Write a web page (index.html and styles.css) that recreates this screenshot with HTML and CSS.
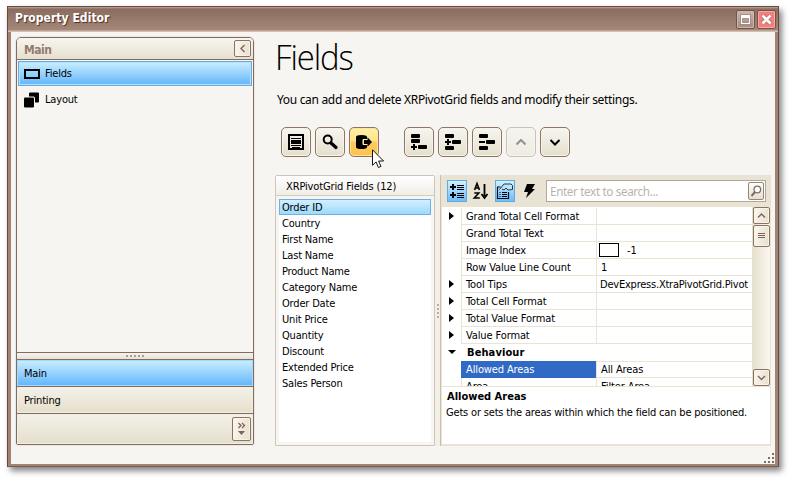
FILE: index.html
```html
<!DOCTYPE html>
<html lang="en">
<head>
<meta charset="utf-8">
<title>Property Editor</title>
<link rel="stylesheet" href="styles.css">
</head>
<body>
<div class="window">
  <header class="titlebar">
    <h1>Property Editor</h1>
    <button class="win-btn" aria-label="Maximize"><svg width="17" height="17"><path fill="#fff" stroke="#806257" stroke-width=".6" fill-rule="evenodd" d="M3.500 3.500h10v10h-10zM5.500 7.500v4h6v-4z"/></svg></button>
    <button class="win-btn close" aria-label="Close"><svg width="17" height="17"><path d="M4.500 4.500l8 8M12.500 4.500l-8 8" stroke="#a8625f" stroke-width="4"/><path d="M4.500 4.500l8 8M12.500 4.500l-8 8" stroke="#fff" stroke-width="2.700"/></svg></button>
  </header>
  <div class="content">
    <nav class="nav">
      <div class="nav-head"><b>Main</b><button class="small-btn" aria-label="Collapse"><svg width="15" height="15"><path d="M9.500 4L6 7.500 9.500 11" fill="none" stroke="#806257" stroke-width="1.4"/></svg></button></div>
      <div class="nav-items">
        <div class="nav-item selected"><svg width="16" height="16"><path d="M1 4h14v8H1z" fill="none" stroke="#000" stroke-width="2"/></svg><span>Fields</span></div>
        <div class="nav-item"><svg width="16" height="16"><path d="M5 1.500a1 1 0 0 1 1-1h8a1 1 0 0 1 1 1v8a1 1 0 0 1-1 1h-3V6a1.500 1.500 0 0 0-1.500-1.500H5z"/><rect y="5.500" width="10" height="10" rx="1"/></svg><span>Layout</span></div>
      </div>
      <div class="nav-split"><i></i><i></i><i></i><i></i><i></i></div>
      <div class="group active">Main</div>
      <div class="group">Printing</div>
      <div class="nav-foot"><button class="small-btn tall" aria-label="Configure"><svg width="17" height="22"><path d="M5.500 5l2.500 2.500L5.500 10M9 5l2.500 2.500L9 10" fill="none" stroke="#806257" stroke-width="1.3"/><path d="M5 13h7l-3.500 4z" fill="#806257"/></svg></button></div>
    </nav>
    <main class="main">
      <h2>Fields</h2>
      <p class="intro">You can add and delete XRPivotGrid fields and modify their settings.</p>
      <div class="actions">
        <button><svg width="28" height="28"><path d="M7 7h14v14H7z" fill="none" stroke="#000" stroke-width="2"/><path d="M9 10.500h10M9 17.500h10M10 19.500h8" stroke="#000"/><path d="M9 12h10v4H9z"/></svg></button>
        <button><svg width="28" height="28"><circle cx="11.700" cy="11.500" r="4" fill="none" stroke="#000" stroke-width="2"/><path d="M15 15l5 4.500" stroke="#000" stroke-width="3.200" stroke-linecap="round"/></svg></button>
        <button class="hot"><svg width="28" height="28"><path d="M6 9q0-2 5.500-2t5.500 2v2h-4v6h4v2q0 2-5.500 2T6 19z"/><path d="M14 12h3.500V9.200L22 14l-4.500 4.800V16H14z"/><path d="M17 11.500h-4v5h4" stroke="#fff0ab" fill="none"/></svg></button>
        <button class="gap"><svg width="28" height="28"><rect x="6" y="6" width="9" height="4" rx="1"/><rect x="6" y="11" width="9" height="4" rx="1"/><rect x="13" y="17" width="9" height="4" rx="1"/><path d="M6 19h6M9 16v6" stroke="#000" stroke-width="2"/></svg></button>
        <button><svg width="28" height="28"><rect x="6" y="6" width="9" height="4" rx="1"/><rect x="13" y="12" width="9" height="4" rx="1"/><rect x="6" y="18" width="9" height="4" rx="1"/><path d="M6 14h6M9 11v6" stroke="#000" stroke-width="2"/></svg></button>
        <button><svg width="28" height="28"><rect x="6" y="6" width="9" height="4" rx="1"/><rect x="13" y="12" width="9" height="4" rx="1"/><rect x="6" y="18" width="9" height="4" rx="1"/><path d="M6 14h6" stroke="#000" stroke-width="2"/></svg></button>
        <button class="disabled"><svg width="28" height="28"><path d="M9.500 16.500L14 12l4.500 4.500" fill="none" stroke="#000" stroke-width="2"/></svg></button>
        <button><svg width="28" height="28"><path d="M9.500 12L14 16.500 18.500 12" fill="none" stroke="#000" stroke-width="2"/></svg></button>
      </div>
      <div class="panes">
        <section class="fields">
          <h3>XRPivotGrid Fields (12)</h3>
          <ul>
            <li class="selected">Order ID</li><li>Country</li><li>First Name</li><li>Last Name</li><li>Product Name</li><li>Category Name</li><li>Order Date</li><li>Unit Price</li><li>Quantity</li><li>Discount</li><li>Extended Price</li><li>Sales Person</li>
          </ul>
        </section>
        <div class="splitter"><i></i><i></i><i></i><i></i></div>
        <section class="props">
          <div class="tools">
            <button class="on" aria-label="Categorized"><svg width="18" height="20"><path d="M2 6h6M5 3v6M2 14h6M5 11v6" stroke="#000" stroke-width="2"/><path d="M9 4.500h7M9 6.500h7M9 8.500h7M9 12.500h7M9 14.500h7M9 16.500h7" stroke="#000"/></svg></button>
            <button aria-label="Sort"><svg width="18" height="20"><path d="M2.500 9L5 2.500 7.500 9M3.500 7h3M2.300 12h4.500l-4.500 5h5.500" fill="none" stroke="#000" stroke-width="1.6"/><path d="M12.500 3v12M9.500 13l3 4 3-4" fill="none" stroke="#000" stroke-width="1.8"/></svg></button>
            <button class="on" aria-label="Properties"><svg width="18" height="20"><path d="M4.500 6h-3v11.500h11V11" fill="none" stroke="#111" stroke-width="1.200"/><path d="M3.500 8.500L8 3h7l1.500 1.500v4L12 9l-2-2-2 2-2-1" fill="#bae5ff" stroke="#303940"/><path d="M3.500 11.500h1M6 11.500h5M3.500 13.500h1M6 13.500h5M3.500 15.500h1M6 15.500h5" stroke="#000"/></svg></button>
            <button aria-label="Events"><svg width="18" height="20"><path d="M7 3h8l-3 5h3L6 17l2-6H4z"/></svg></button>
            <label class="search"><span>Enter text to search...</span><button class="find" aria-label="Search"><svg width="14" height="17"><circle cx="8.300" cy="6.500" r="3.300" fill="#fffefa" stroke="#79716c" stroke-width="1.300"/><path d="M6 9l-3.500 4" stroke="#79716c" stroke-width="2"/></svg></button></label>
          </div>
          <div class="table-wrap">
            <div class="table">
              <div class="row"><i class="arrow"></i><span>Grand Total Cell Format</span><span></span></div>
              <div class="row"><i></i><span>Grand Total Text</span><span></span></div>
              <div class="row"><i></i><span>Image Index</span><span class="image-value"><b class="swatch"></b>-1</span></div>
              <div class="row"><i></i><span>Row Value Line Count</span><span>1</span></div>
              <div class="row"><i class="arrow"></i><span>Tool Tips</span><span class="long">DevExpress.XtraPivotGrid.Pivot</span></div>
              <div class="row"><i class="arrow"></i><span>Total Cell Format</span><span></span></div>
              <div class="row"><i class="arrow"></i><span>Total Value Format</span><span></span></div>
              <div class="row"><i class="arrow"></i><span>Value Format</span><span></span></div>
              <div class="row category"><i class="arrow open"></i><strong>Behaviour</strong></div>
              <div class="row current"><i></i><span>Allowed Areas</span><span>All Areas</span></div>
              <div class="row"><i></i><span>Area</span><span>Filter Area</span></div>
            </div>
            <div class="scroll">
              <button class="small-btn"><svg width="15" height="15"><path d="M4 9.500L7.500 6 11 9.500" fill="none" stroke="#806257" stroke-width="1.4"/></svg></button>
              <button class="small-btn thumb"><svg width="15" height="20"><path d="M4 7.500h7M4 9.500h7M4 11.500h7" stroke="#806257"/></svg></button>
              <div class="track"></div>
              <button class="small-btn"><svg width="15" height="15"><path d="M4 6l3.500 3.500L11 6" fill="none" stroke="#806257" stroke-width="1.4"/></svg></button>
            </div>
          </div>
          <div class="help"><strong>Allowed Areas</strong><p>Gets or sets the areas within which the field can be positioned.</p></div>
        </section>
      </div>
    </main>
  </div>
  <svg class="grip" width="10" height="10"><path d="M8 0h2v2H8zM4 4h2v2H4zM8 4h2v2H8zM0 8h2v2H0zM4 8h2v2H4zM8 8h2v2H8z" fill="#806c60"/></svg>
</div>
<svg class="cursor" width="13" height="20"><path d="M.5.8v15.500l3.600-3.400 2.300 5.600 2.600-1.100-2.400-5.400h5z" fill="#fff" stroke="#151515"/></svg>
</body>
</html>
```
FILE: styles.css
```css
* { box-sizing: border-box; }
body { margin: 0; width: 792px; height: 481px; overflow: hidden; background: #fff; color: #000; font: 11px/16px "DejaVu Sans Condensed", "DejaVu Sans", sans-serif; letter-spacing: -.18px; }
h1, h2, h3, p, ul { margin: 0; padding: 0; }
button { padding: 0; font: inherit; }
svg { display: block; flex: none; }

.window { position: relative; width: 772px; height: 461px; margin: 6px 0 0 7px; padding: 0 3px 2px; border: 1px solid #66493f; border-bottom-color: #765b4f; background: #a18374; box-shadow: 3px 4px 6px rgba(0,0,0,.48); }
.titlebar { height: 25px; margin: 0 -3px; padding: 2px 2px 0 7px; display: flex; background: linear-gradient(#c0a69a 0, #8b6d60 2px, #a68879 23px, #d2beb3 24px); }
.titlebar h1 { flex: 1; color: #fff; font-size: 12px; line-height: 19px; letter-spacing: .05px; text-shadow: 1px 1px 1px #49342b; }
.win-btn { width: 19px; height: 19px; margin: 1px 0 0 2px; border: 1px solid #70554a; border-radius: 2px; background: linear-gradient(#cbb8ae, #a68b7e); box-shadow: inset 0 0 0 1px #cbb6ab; }
.win-btn.close { background: #f37e7c; box-shadow: inset 0 0 0 1px #fba7a3; }
.content { height: 432px; display: flex; padding: 5px 4px 0 5px; background: #f6f5f1; }

.nav { width: 238px; height: 408px; display: flex; flex-direction: column; border: 1px solid #806c60; border-radius: 5px 5px 2px 2px; overflow: hidden; box-shadow: 0 0 0 1px #ebe7e1; }
.nav-head { height: 22px; display: flex; justify-content: space-between; padding: 2px 2px 0 7px; border-bottom: 1px solid #806c60; background: linear-gradient(#f7f5ef, #e7e0d0); }
.nav-head b { color: #937b6e; font-size: 12px; line-height: 20px; letter-spacing: -.5px; }
.small-btn { width: 17px; height: 17px; flex: none; border: 1px solid #907263; border-radius: 2px; background: linear-gradient(100deg, #faf8f3, #e7dfcd); box-shadow: inset 0 0 0 1px #f7f3e9; }
.nav-items { flex: 1; padding: 1px; }
.nav-item { height: 27px; display: flex; align-items: center; gap: 5px; padding-left: 6px; }
.nav-item.selected { height: 25px; border: 1px solid #67aae2; padding-left: 5px; background: linear-gradient(#caefff, #62b5fb); box-shadow: inset 0 0 0 1px #b3e2ff; }
.nav-split { height: 8px; display: flex; gap: 2px; justify-content: center; align-items: center; border: solid #806c60; border-width: 1px 0; background: linear-gradient(#f5f3ec, #e8e2d5); }
.nav-split i { width: 2px; height: 2px; background: #aaa091; }
.group { height: 27px; line-height: 28px; padding-left: 7px; border-bottom: 1px solid #806c60; background: linear-gradient(#f4f1ea, #e5dfcb); box-shadow: inset 0 0 0 1px #f1eee4; }
.group.active { background: linear-gradient(#caefff, #62b5fb); box-shadow: inset 0 0 0 1px #a5daff; }
.nav-foot { height: 30px; display: flex; justify-content: flex-end; padding: 3px 2px; background: linear-gradient(#f4f1ea, #e5dfcb); box-shadow: inset 0 0 0 1px #f1eee4; }
.small-btn.tall { width: 19px; height: 24px; }

.main { width: 496px; margin-left: 21px; }
.main h2 { height: 46px; font: 300 35px/39px "Open Sans", "Noto Sans", sans-serif; letter-spacing: -1.2px; transform: scaleX(.94); transform-origin: 0 0; }
.intro { height: 44px; padding: 7px 0 0 2px; font: 12px/20px "Noto Sans", "Open Sans", sans-serif; letter-spacing: -.325px; white-space: nowrap; }
.actions { display: flex; gap: 4px; height: 48px; padding-left: 6px; }
.actions button { width: 30px; height: 30px; border: 1px solid #8d7466; border-radius: 5px; background: linear-gradient(#f7f5ef, #e5dfcc); box-shadow: inset 0 0 0 1px #f7f4eb; }
.actions .hot { background: linear-gradient(#fff0ac, #ffe588 45%, #fdca62 50%, #ffc24c); box-shadow: inset 0 0 0 1px #ffe68b; }
.actions .gap { margin-left: 21px; }
.actions .disabled { opacity: .4; }
.panes { height: 271px; display: flex; }
.fields { width: 160px; padding: 0 3px 3px; border: 1px solid #d0c6b7; border-radius: 2px 2px 0 0; background: #f6f5f1; }
.fields h3 { height: 20px; margin: 0 -3px 3px; padding-left: 10px; border-bottom: 1px solid #d4cdba; background: linear-gradient(#fff, #f1eee8); font-size: 11px; font-weight: 400; line-height: 21px; letter-spacing: -.13px; }
.fields ul { height: 243px; list-style: none; background: #fff; }
.fields li { height: 16px; padding-left: 3px; line-height: 17px; }
.fields .selected { border: 1px solid #71aee3; padding-left: 2px; line-height: 15px; background: linear-gradient(#d3efff, #9cdafd); }
.splitter { width: 6px; display: flex; flex-direction: column; align-items: center; justify-content: center; gap: 2px; border: solid #cdbeb1; border-width: 0 1px 0 0; background: #f2efe7; }
.splitter i { width: 2px; height: 2px; background: #bbada0; }
.props { width: 330px; border: solid #e8e3d3; border-width: 0 1px 2px; background: #fff; }
.tools { height: 32px; margin: 0 -1px; padding: 5px 5px 0 6px; display: flex; background: #e8e3d3; }
.tools > button { width: 20px; height: 22px; margin-right: 4px; border: 1px solid transparent; background: transparent; }
.tools .on { border-color: #61a9e3; background: linear-gradient(#d1f0ff, #6dbcfb); }
.search { width: 220px; height: 22px; margin-left: auto; padding: 1px 1px 0 3px; display: flex; justify-content: space-between; border: 1px solid #b4a69b; background: #fff; color: #b8b4ac; font: 11.7px/19px "Noto Sans", "Open Sans", sans-serif; letter-spacing: -.36px; }
.find { width: 16px; height: 18px; border: 1px solid #998479; border-radius: 2px; background: linear-gradient(#fffdf8, #e7dfcd); }
.table-wrap { height: 179px; display: flex; overflow: hidden; }
.table { width: 310px; height: 179px; padding-top: 1px; overflow: hidden; }
.row { height: 17px; display: grid; grid-template-columns: 19px 135px 156px; align-items: stretch; line-height: 17px; }
.row > span { padding-left: 4px; border: solid #e8e3d3; border-width: 0 0 1px 1px; white-space: nowrap; overflow: hidden; letter-spacing: -.12px; }
.row > .long { padding-left: 3px; letter-spacing: -.22px; }
.row > i { display: flex; align-items: flex-start; padding: 4px 0 0 7px; }
.arrow::after { content: ""; width: 0; height: 0; border: 4px solid transparent; border-right: 0; border-left: 5px solid #000; }
.arrow.open { padding-left: 6px !important; padding-top: 6px !important; }
.arrow.open::after { border: 4px solid transparent; border-bottom: 0; border-top-color: #000; }
.row.category { grid-template-columns: 19px 291px; }
.category strong { padding-left: 6px; border-bottom: 1px solid #e8e3d3; letter-spacing: .1px; }
.row.current span:nth-child(2) { color: #fff; background: #316ac5; border-color: #316ac5; }
.image-value { display: flex; }
.row .image-value { padding-left: 2px; }
.swatch { width: 20px; height: 14px; margin: 1px 8px 0 0; border: 1px solid #000; }
.scroll { width: 18px; display: flex; flex-direction: column; background: linear-gradient(90deg, #e5dfcd, #faf7ef); }
.scroll .small-btn { margin-left: 1px; }
.scroll .thumb { height: 22px; margin-top: 1px; }
.track { flex: 1; }
.help { height: 58px; padding: 2px 4px; border-top: 1px solid #e8e3d3; }
.help strong { display: block; padding-left: 1px; letter-spacing: 0; }
.help p { white-space: nowrap; }
.grip { position: absolute; right: 4px; bottom: 3px; }
.cursor { position: absolute; left: 372px; top: 149px; }
```
